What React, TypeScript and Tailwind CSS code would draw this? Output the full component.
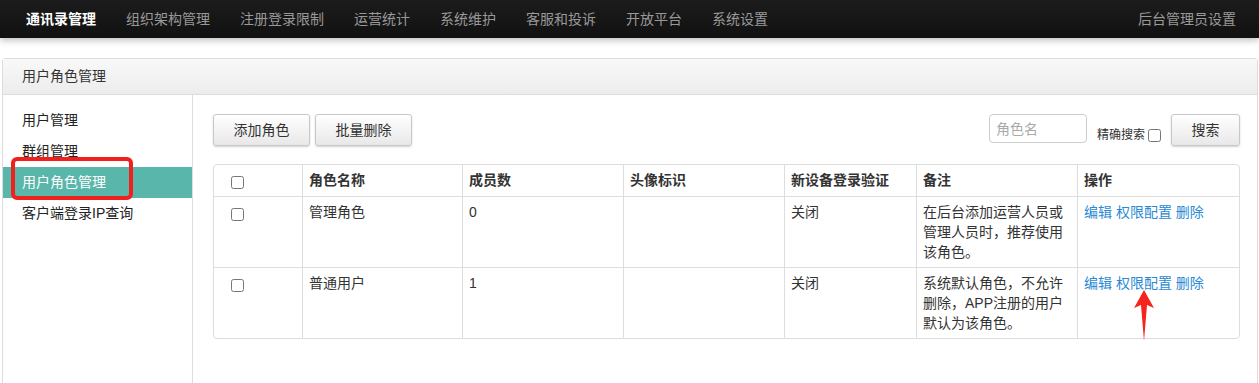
import React from "react";

const FONT = { fontFamily: '"Liberation Sans", "Noto Sans CJK SC", sans-serif' };

const navItems = ["组织架构管理", "注册登录限制", "运营统计", "系统维护", "客服和投诉", "开放平台", "系统设置"];

const cols = "grid grid-cols-[89px_160px_161px_161px_132px_161px_160px]";

function Btn({ children, w }: { children: React.ReactNode; w: string }) {
  return (
    <button
      className={`${w} h-[32px] rounded-[3px] border border-[#c8c8c8] bg-linear-to-b from-white to-[#e8e8e8] text-[14px] text-[#333] shadow-[0_1px_2px_rgba(0,0,0,0.18)]`}
    >
      {children}
    </button>
  );
}

const rows = [
  {
    name: "管理角色",
    count: "0",
    verify: "关闭",
    note: ["在后台添加运营人员或", "管理人员时，推荐使用", "该角色。"],
  },
  {
    name: "普通用户",
    count: "1",
    verify: "关闭",
    note: ["系统默认角色，不允许", "删除，APP注册的用户", "默认为该角色。"],
  },
];

export default function App() {
  return (
    <div className="relative w-[1259px] h-[383px] overflow-hidden bg-white text-[#333]" style={FONT}>
      {/* top nav */}
      <div className="relative z-10 h-[38px] bg-linear-to-b from-[#1c1c1c] to-[#111] flex items-center pl-[11px] pr-[8px] shadow-[0_2px_7px_rgba(0,0,0,0.28)]">
        <span className="px-[15px] text-[14px] font-bold text-white leading-[20px]">通讯录管理</span>
        {navItems.map((n) => (
          <span key={n} className="px-[15px] text-[14px] text-[#999] leading-[20px]">
            {n}
          </span>
        ))}
        <span className="ml-auto px-[15px] text-[14px] text-[#999] leading-[20px]">后台管理员设置</span>
      </div>

      {/* panel */}
      <div className="mt-[20px] ml-[2px] mr-[1px] border border-[#ddd] rounded-t-[3px]">
        <div className="h-[36px] border-b border-[#ddd] bg-linear-to-b from-[#f9f9f9] to-[#ececec] pl-[19px] text-[14px] leading-[35px] text-[#333]">
          用户角色管理
        </div>
        <div className="flex h-[320px]">
          {/* sidebar */}
          <div className="w-[190px] shrink-0 border-r border-[#ddd] pt-[10px]">
            <div className="h-[31px] leading-[31px] pl-[19px] text-[14px] text-[#222]">用户管理</div>
            <div className="h-[31px] leading-[31px] pl-[19px] text-[14px] text-[#222]">群组管理</div>
            <div className="h-[31px] leading-[31px] pl-[19px] text-[14px] text-white bg-[#59b6aa]">用户角色管理</div>
            <div className="h-[31px] leading-[31px] pl-[19px] text-[14px] text-[#222]">客户端登录IP查询</div>
          </div>

          {/* main */}
          <div className="flex-1 pl-[20px] pr-[17px] pt-[19px]">
            <div className="flex items-start">
              <div className="flex gap-[5px]">
                <Btn w="w-[97px]">添加角色</Btn>
                <Btn w="w-[97px]">批量删除</Btn>
              </div>
              <div className="ml-auto flex items-start">
                <input
                  placeholder="角色名"
                  className="w-[98px] h-[29px] rounded-[4px] border border-[#ccc] px-[6px] text-[14px] placeholder:text-[#aaa] outline-none"
                />
                <div className="ml-[10px] mt-[14px] flex items-center">
                  <span className="text-[12px] leading-[15px] text-[#333]">精确搜索</span>
                  <input type="checkbox" className="ml-[3px] w-[13px] h-[13px] m-0" />
                </div>
                <div className="ml-[10px]">
                  <Btn w="w-[69px]">搜索</Btn>
                </div>
              </div>
            </div>

            {/* table */}
            <div className="mt-[18px] border border-[#ddd] rounded-[4px] overflow-hidden text-[14px] leading-[20px]">
              <div className={`${cols} border-b border-[#ddd] font-bold text-[#333]`}>
                <div className="border-r border-[#ddd] pl-[17px] pt-[11px] h-[31px]">
                  <input type="checkbox" className="w-[13px] h-[13px] m-0 block" />
                </div>
                <div className="border-r border-[#ddd] px-[6px] py-[5px]">角色名称</div>
                <div className="border-r border-[#ddd] px-[6px] py-[5px]">成员数</div>
                <div className="border-r border-[#ddd] px-[6px] py-[5px]">头像标识</div>
                <div className="border-r border-[#ddd] px-[6px] py-[5px]">新设备登录验证</div>
                <div className="border-r border-[#ddd] px-[6px] py-[5px]">备注</div>
                <div className="px-[6px] py-[5px]">操作</div>
              </div>
              {rows.map((r, i) => (
                <div key={r.name} className={`${cols} ${i === 0 ? "border-b border-[#ddd]" : ""} text-[#333]`}>
                  <div className="border-r border-[#ddd] pl-[17px] pt-[11px]">
                    <input type="checkbox" className="w-[13px] h-[13px] m-0 block" />
                  </div>
                  <div className="border-r border-[#ddd] px-[6px] py-[5px]">{r.name}</div>
                  <div className="border-r border-[#ddd] px-[6px] py-[5px]">{r.count}</div>
                  <div className="border-r border-[#ddd] px-[6px] py-[5px]"></div>
                  <div className="border-r border-[#ddd] px-[6px] py-[5px]">{r.verify}</div>
                  <div className="border-r border-[#ddd] px-[6px] py-[5px]">
                    {r.note.map((l) => (
                      <div key={l}>{l}</div>
                    ))}
                  </div>
                  <div className="px-[6px] py-[5px] text-[#2a89d4]">
                    <span>编辑</span> <span>权限配置</span> <span>删除</span>
                  </div>
                </div>
              ))}
            </div>
          </div>
        </div>
      </div>

      {/* annotation: red box */}
      <div className="absolute left-[11px] top-[157px] w-[122px] h-[43px] border-4 border-[#f2201d] rounded-[6px]" />

      {/* annotation: red arrow */}
      <svg className="absolute left-[1133px] top-[289px]" width="23" height="53" viewBox="0 0 23 53">
        <polygon points="11,1 21,19 14,16 11,52 8,16 1,19" fill="#f5241c" />
      </svg>
    </div>
  );
}
